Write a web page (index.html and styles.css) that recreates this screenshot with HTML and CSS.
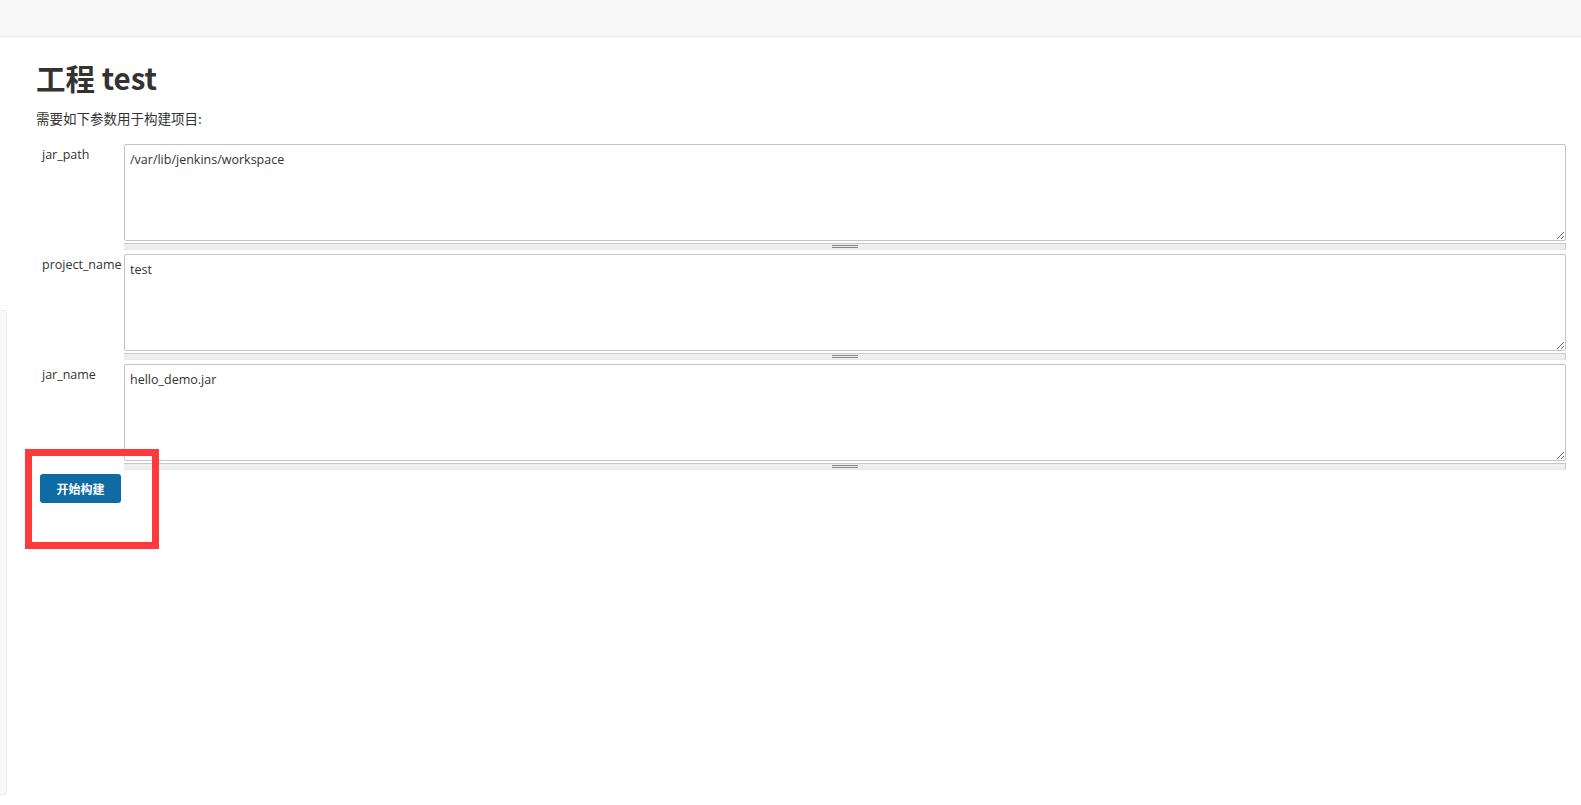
FILE: index.html
```html
<!DOCTYPE html>
<html lang="zh">
<head>
<meta charset="utf-8">
<title>工程 test</title>
<link rel="stylesheet" href="styles.css">
</head>
<body>
<div class="topbar"></div>
<div class="side-strip"></div>
<main class="main">
  <h1 class="title">工程 test</h1>
  <p class="desc">需要如下参数用于构建项目:</p>
  <div class="params">
    <div class="row">
      <div class="label">jar_path</div>
      <div class="field">
        <textarea class="ta">/var/lib/jenkins/workspace</textarea>
        <div class="grip"><span></span></div>
      </div>
    </div>
    <div class="row">
      <div class="label">project_name</div>
      <div class="field">
        <textarea class="ta">test</textarea>
        <div class="grip"><span></span></div>
      </div>
    </div>
    <div class="row">
      <div class="label">jar_name</div>
      <div class="field">
        <textarea class="ta">hello_demo.jar</textarea>
        <div class="grip"><span></span></div>
      </div>
    </div>
  </div>
  <div class="actions">
    <button class="btn">开始构建</button>
  </div>
</main>
<div class="annot"></div>
</body>
</html>
```

FILE: styles.css
```css
* { box-sizing: border-box; }
html, body { margin: 0; padding: 0; background: #fff; }
body {
  font-family: "Open Sans", "Noto Sans", "Noto Sans CJK SC", sans-serif;
  color: #333;
  font-size: 13px;
  position: relative;
  min-height: 805px;
}
.topbar {
  height: 37px;
  background: #f8f8f8;
  border-bottom: 1px solid #e6eaee;
}
.side-strip {
  position: absolute;
  left: 0;
  top: 310px;
  width: 7px;
  height: 485px;
  background: #f8f8f8;
  border: 1px solid #eeeeee;
  border-left: none;
  border-radius: 0 3px 3px 0;
}
.main {
  padding: 22px 15px 0 36px;
}
.title {
  margin: 0;
  font-family: "Noto Sans CJK SC", "Noto Sans", sans-serif;
  font-size: 29.5px;
  font-weight: 700;
  line-height: 36px;
  color: #333;
}
.desc {
  margin: 14px 0 0 0;
  font-family: "Noto Sans CJK SC", sans-serif;
  font-size: 13.5px;
  line-height: 18px;
}
.params {
  margin-top: 17px;
  display: flex;
  flex-direction: column;
  gap: 4px;
}
.row {
  display: flex;
}
.label {
  width: 88px;
  flex: 0 0 88px;
  padding: 2px 0 0 6px;
  font-size: 12.5px;
  line-height: 18px;
  white-space: nowrap;
}
.field {
  flex: 1;
  display: flex;
  flex-direction: column;
}
.ta {
  display: block;
  width: 100%;
  height: 97px;
  margin: 0;
  padding: 6px 5px;
  border: 1px solid #c4c4c4;
  border-radius: 2px;
  font-family: "Open Sans", "Noto Sans", sans-serif;
  font-size: 12.5px;
  line-height: 18px;
  color: #333;
  resize: vertical;
  background: #fff;
}
.grip {
  margin-top: 2px;
  height: 7px;
  background: #eeeeee;
  border-top: 1px solid #c8c8c8;
  border-right: 1px solid #c8c8c8;
  border-bottom: 1px solid #e8e8e8;
  display: flex;
  justify-content: center;
  align-items: center;
}
.grip span {
  width: 26px;
  height: 3px;
  border-top: 1px solid #888;
  border-bottom: 1px solid #888;
}
.actions {
  margin-top: 4px;
  padding-left: 4px;
}
.btn {
  width: 81px;
  height: 29px;
  border: none;
  border-radius: 3px;
  background: #0f6ba3;
  color: #fff;
  font-family: "Noto Sans CJK SC", sans-serif;
  font-weight: 700;
  font-size: 12px;
  padding: 0;
}
.annot {
  position: absolute;
  left: 25px;
  top: 449px;
  width: 134px;
  height: 100px;
  border: 7px solid #fe3a3c;
}
```
